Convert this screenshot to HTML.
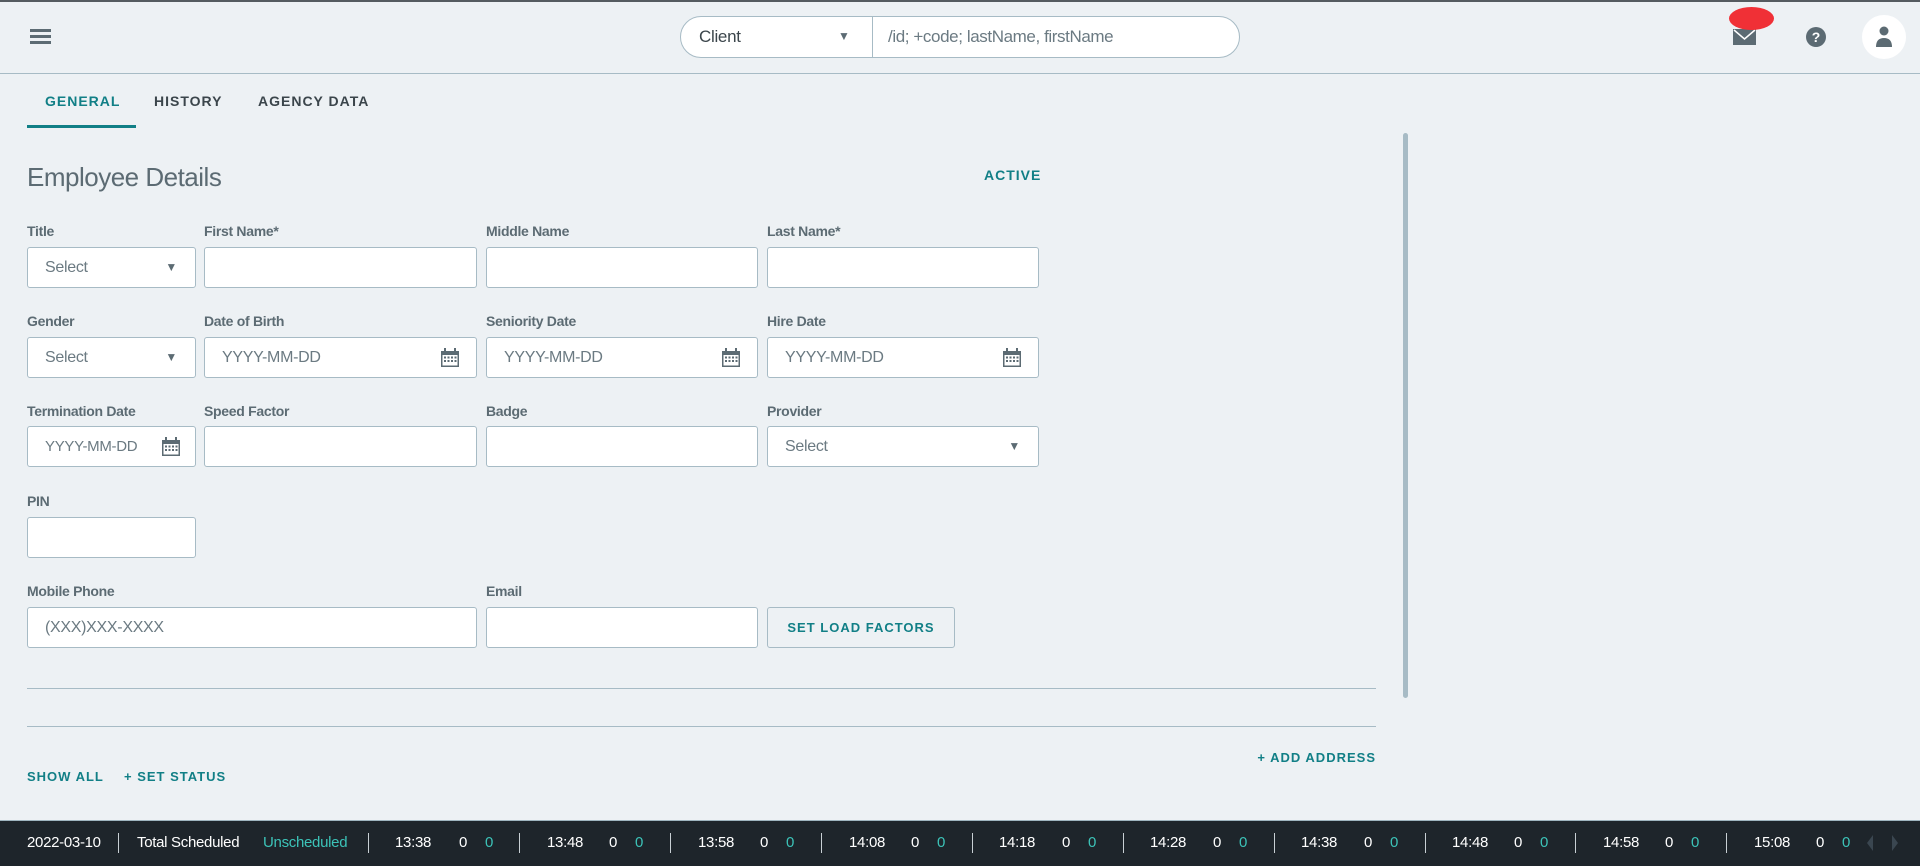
<!DOCTYPE html>
<html><head><meta charset="utf-8"><style>
*{box-sizing:border-box;margin:0;padding:0}
body{width:1920px;height:866px;background:#edf1f4;font-family:"Liberation Sans",sans-serif;position:relative;overflow:hidden;color:#5c6b73}
.a{position:absolute}
.lbl{position:absolute;font-size:14px;font-weight:bold;color:#5c6b73;letter-spacing:-0.3px}
.in{position:absolute;height:41px;background:#fff;border:1px solid #a7bbc5;border-radius:3px;font-size:16px;color:#6b7a82;padding-left:17px;line-height:39px;letter-spacing:-0.3px}
.arr{position:absolute;right:18px;top:0;font-size:12px;color:#5c6b73}
.cal{position:absolute;right:16px;top:10px}
.teal{color:#117f86;font-weight:bold;font-size:14px;letter-spacing:1px}
.bb{position:absolute;top:820px;left:0;width:1920px;height:46px;background:#1e252b;border-top:1px solid #9fb5bf;color:#fff;font-size:15px;letter-spacing:-0.3px}
.bb span{position:absolute;top:13px}
.sep{position:absolute;top:12px;width:1px;height:20px;background:#c8d0d4}
.c{color:#3cc3b8}
</style></head><body>
<div class="a" style="left:0;top:0;width:1920px;height:2px;background:#555b60"></div>
<div class="a" style="left:0;top:73px;width:1920px;height:1px;background:#a7bbc5"></div>
<div class="a" style="left:30px;top:29px;width:21px;height:3px;background:#5c6b73"></div>
<div class="a" style="left:30px;top:35px;width:21px;height:3px;background:#5c6b73"></div>
<div class="a" style="left:30px;top:41px;width:21px;height:3px;background:#5c6b73"></div>
<div class="a" style="left:680px;top:16px;width:560px;height:42px;background:#fff;border:1px solid #a7bbc5;border-radius:21px"></div>
<div class="a" style="left:872px;top:17px;width:1px;height:40px;background:#a7bbc5"></div>
<div class="a" style="left:699px;top:27px;font-size:17px;color:#3b454b;letter-spacing:-0.3px">Client</div>
<div class="a" style="left:838px;top:29px;font-size:12px;color:#5c6b73">▼</div>
<div class="a" style="left:888px;top:27px;font-size:17px;color:#6b7a82;letter-spacing:-0.4px">/id; +code; lastName, firstName</div>
<svg class="a" style="left:1733px;top:29px" width="23" height="16" viewBox="0 0 23 16"><rect width="23" height="16" fill="#5c6b73"/><path d="M1 1 L11.5 10 L22 1" stroke="#fff" stroke-width="1.5" fill="none"/></svg>
<div class="a" style="left:1729px;top:7px;width:45px;height:23px;border-radius:50%;background:#f03036"></div>
<svg class="a" style="left:1806px;top:27px" width="20" height="20" viewBox="0 0 20 20"><circle cx="10" cy="10" r="10" fill="#5c6b73"/><text x="10" y="15" font-size="14" font-weight="bold" text-anchor="middle" fill="#fff" font-family="Liberation Sans">?</text></svg>
<div class="a" style="left:1862px;top:15px;width:44px;height:44px;border-radius:50%;background:#fff"></div>
<svg class="a" style="left:1872px;top:26px" width="24" height="22" viewBox="0 0 24 22"><circle cx="12" cy="5" r="4.5" fill="#5c6b73"/><path d="M4 21 Q4 12 12 12 Q20 12 20 21 Z" fill="#5c6b73"/></svg>
<div class="a teal" style="left:45px;top:93px">GENERAL</div>
<div class="a" style="left:154px;top:93px;font-size:14px;font-weight:bold;letter-spacing:1px;color:#3b454b">HISTORY</div>
<div class="a" style="left:258px;top:93px;font-size:14px;font-weight:bold;letter-spacing:1px;color:#3b454b">AGENCY DATA</div>
<div class="a" style="left:27px;top:125px;width:109px;height:3px;background:#117f86"></div>
<div class="a" style="left:27px;top:162px;font-size:26px;color:#5c6b73;letter-spacing:-0.5px">Employee Details</div>
<div class="a teal" style="left:984px;top:167px">ACTIVE</div>
<div class="a" style="left:1403px;top:133px;width:5px;height:565px;background:#a7bbc5;border-radius:3px"></div>

<div class="lbl" style="left:27px;top:223px">Title</div>
<div class="lbl" style="left:204px;top:223px">First Name*</div>
<div class="lbl" style="left:486px;top:223px">Middle Name</div>
<div class="lbl" style="left:767px;top:223px">Last Name*</div>
<div class="in" style="left:27px;top:247px;width:169px">Select<span class="arr">▼</span></div>
<div class="in" style="left:204px;top:247px;width:273px"></div>
<div class="in" style="left:486px;top:247px;width:272px"></div>
<div class="in" style="left:767px;top:247px;width:272px"></div>

<div class="lbl" style="left:27px;top:313px">Gender</div>
<div class="lbl" style="left:204px;top:313px">Date of Birth</div>
<div class="lbl" style="left:486px;top:313px">Seniority Date</div>
<div class="lbl" style="left:767px;top:313px">Hire Date</div>
<div class="in" style="left:27px;top:337px;width:169px">Select<span class="arr">▼</span></div>
<div class="in" style="left:204px;top:337px;width:273px">YYYY-MM-DD<svg class="cal" width="20" height="20" viewBox="0 0 20 20"><rect x="1" y="3" width="18" height="16" fill="#5c6b73"/><rect x="2.5" y="7" width="15" height="10.5" fill="#fff"/><rect x="4" y="0" width="2" height="5" fill="#5c6b73"/><rect x="14" y="0" width="2" height="5" fill="#5c6b73"/><g fill="#5c6b73"><rect x="4" y="8.5" width="2" height="2"/><rect x="7.5" y="8.5" width="2" height="2"/><rect x="11" y="8.5" width="2" height="2"/><rect x="14.5" y="8.5" width="2" height="2"/><rect x="4" y="12" width="2" height="2"/><rect x="7.5" y="12" width="2" height="2"/><rect x="11" y="12" width="2" height="2"/><rect x="14.5" y="12" width="2" height="2"/></g></svg></div>
<div class="in" style="left:486px;top:337px;width:272px">YYYY-MM-DD<svg class="cal" width="20" height="20" viewBox="0 0 20 20"><rect x="1" y="3" width="18" height="16" fill="#5c6b73"/><rect x="2.5" y="7" width="15" height="10.5" fill="#fff"/><rect x="4" y="0" width="2" height="5" fill="#5c6b73"/><rect x="14" y="0" width="2" height="5" fill="#5c6b73"/><g fill="#5c6b73"><rect x="4" y="8.5" width="2" height="2"/><rect x="7.5" y="8.5" width="2" height="2"/><rect x="11" y="8.5" width="2" height="2"/><rect x="14.5" y="8.5" width="2" height="2"/><rect x="4" y="12" width="2" height="2"/><rect x="7.5" y="12" width="2" height="2"/><rect x="11" y="12" width="2" height="2"/><rect x="14.5" y="12" width="2" height="2"/></g></svg></div>
<div class="in" style="left:767px;top:337px;width:272px">YYYY-MM-DD<svg class="cal" width="20" height="20" viewBox="0 0 20 20"><rect x="1" y="3" width="18" height="16" fill="#5c6b73"/><rect x="2.5" y="7" width="15" height="10.5" fill="#fff"/><rect x="4" y="0" width="2" height="5" fill="#5c6b73"/><rect x="14" y="0" width="2" height="5" fill="#5c6b73"/><g fill="#5c6b73"><rect x="4" y="8.5" width="2" height="2"/><rect x="7.5" y="8.5" width="2" height="2"/><rect x="11" y="8.5" width="2" height="2"/><rect x="14.5" y="8.5" width="2" height="2"/><rect x="4" y="12" width="2" height="2"/><rect x="7.5" y="12" width="2" height="2"/><rect x="11" y="12" width="2" height="2"/><rect x="14.5" y="12" width="2" height="2"/></g></svg></div>

<div class="lbl" style="left:27px;top:403px">Termination Date</div>
<div class="lbl" style="left:204px;top:403px">Speed Factor</div>
<div class="lbl" style="left:486px;top:403px">Badge</div>
<div class="lbl" style="left:767px;top:403px">Provider</div>
<div class="in" style="left:27px;top:426px;width:169px;font-size:15px">YYYY-MM-DD<svg class="cal" style="right:14px" width="20" height="20" viewBox="0 0 20 20"><rect x="1" y="3" width="18" height="16" fill="#5c6b73"/><rect x="2.5" y="7" width="15" height="10.5" fill="#fff"/><rect x="4" y="0" width="2" height="5" fill="#5c6b73"/><rect x="14" y="0" width="2" height="5" fill="#5c6b73"/><g fill="#5c6b73"><rect x="4" y="8.5" width="2" height="2"/><rect x="7.5" y="8.5" width="2" height="2"/><rect x="11" y="8.5" width="2" height="2"/><rect x="14.5" y="8.5" width="2" height="2"/><rect x="4" y="12" width="2" height="2"/><rect x="7.5" y="12" width="2" height="2"/><rect x="11" y="12" width="2" height="2"/><rect x="14.5" y="12" width="2" height="2"/></g></svg></div>
<div class="in" style="left:204px;top:426px;width:273px"></div>
<div class="in" style="left:486px;top:426px;width:272px"></div>
<div class="in" style="left:767px;top:426px;width:272px">Select<span class="arr">▼</span></div>

<div class="lbl" style="left:27px;top:493px">PIN</div>
<div class="in" style="left:27px;top:517px;width:169px"></div>

<div class="lbl" style="left:27px;top:583px">Mobile Phone</div>
<div class="lbl" style="left:486px;top:583px">Email</div>
<div class="in" style="left:27px;top:607px;width:450px">(XXX)XXX-XXXX</div>
<div class="in" style="left:486px;top:607px;width:272px"></div>
<div class="a teal" style="left:767px;top:607px;width:188px;height:41px;border:1px solid #a7bbc5;border-radius:3px;background:#edf1f4;text-align:center;line-height:39px;font-size:13px">SET LOAD FACTORS</div>

<div class="a" style="left:27px;top:688px;width:1349px;height:1px;background:#a7bbc5"></div>
<div class="a" style="left:27px;top:726px;width:1349px;height:1px;background:#a7bbc5"></div>
<div class="a teal" style="right:544px;top:750px;font-size:13px">+ ADD ADDRESS</div>
<div class="a teal" style="left:27px;top:769px;font-size:13px">SHOW ALL</div>
<div class="a teal" style="left:124px;top:769px;font-size:13px">+ SET STATUS</div>

<div class="bb">
<span style="left:27px">2022-03-10</span>
<div class="sep" style="left:118px"></div>
<span style="left:137px">Total Scheduled</span>
<span class="c" style="left:263px">Unscheduled</span>
<div class="sep" style="left:368px"></div>
<span style="left:395px">13:38</span><span style="left:459px">0</span><span class="c" style="left:485px">0</span>
<div class="sep" style="left:519px"></div>
<span style="left:547px">13:48</span><span style="left:609px">0</span><span class="c" style="left:635px">0</span>
<div class="sep" style="left:670px"></div>
<span style="left:698px">13:58</span><span style="left:760px">0</span><span class="c" style="left:786px">0</span>
<div class="sep" style="left:821px"></div>
<span style="left:849px">14:08</span><span style="left:911px">0</span><span class="c" style="left:937px">0</span>
<div class="sep" style="left:972px"></div>
<span style="left:999px">14:18</span><span style="left:1062px">0</span><span class="c" style="left:1088px">0</span>
<div class="sep" style="left:1123px"></div>
<span style="left:1150px">14:28</span><span style="left:1213px">0</span><span class="c" style="left:1239px">0</span>
<div class="sep" style="left:1274px"></div>
<span style="left:1301px">14:38</span><span style="left:1364px">0</span><span class="c" style="left:1390px">0</span>
<div class="sep" style="left:1425px"></div>
<span style="left:1452px">14:48</span><span style="left:1514px">0</span><span class="c" style="left:1540px">0</span>
<div class="sep" style="left:1575px"></div>
<span style="left:1603px">14:58</span><span style="left:1665px">0</span><span class="c" style="left:1691px">0</span>
<div class="sep" style="left:1726px"></div>
<span style="left:1754px">15:08</span><span style="left:1816px">0</span><span class="c" style="left:1842px">0</span>
<svg class="a" style="left:1867px;top:14px" width="45" height="16" viewBox="0 0 45 16"><path d="M6 0 L0 8 L6 16 Z" fill="#3a4650"/><path d="M25 0 L31 8 L25 16 Z" fill="#3a4650"/></svg>
</div>
</body></html>
